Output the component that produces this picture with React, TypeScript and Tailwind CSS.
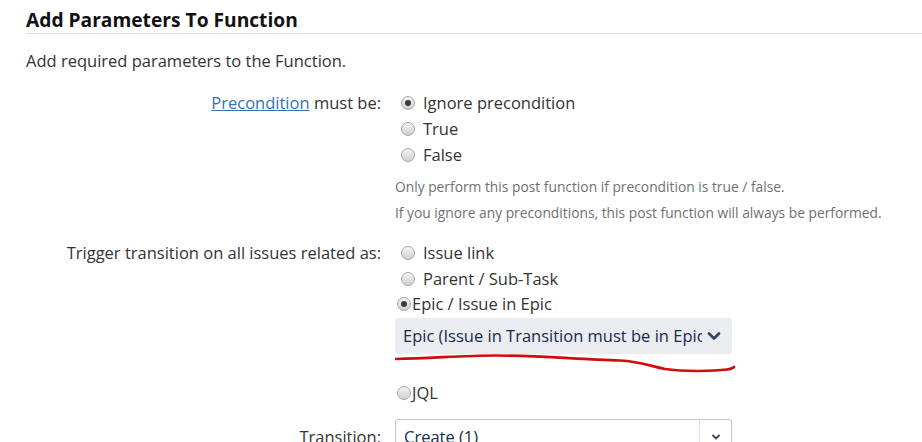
import React from 'react';

const FONT = { fontFamily: '"Open Sans", "Noto Sans", sans-serif' };

function Radio({ checked, label, tight }: { checked?: boolean; label: string; tight?: boolean }) {
  return (
    <div className={`flex items-center h-[26px] ${tight ? 'pl-[2px]' : 'pl-[6px]'}`}>
      <span className="relative inline-flex items-center justify-center w-[14px] h-[14px] rounded-full border border-[#a6a6a6] bg-gradient-to-b from-[#f4f4f4] to-[#d0d0d0]">
        {checked && <span className="w-[6px] h-[6px] rounded-full bg-[#3a3a3a]" />}
      </span>
      <span className={`${tight ? 'ml-[1px]' : 'ml-[8px]'} text-[16.5px] text-[#333]`}>{label}</span>
    </div>
  );
}

function Label({ children }: { children: React.ReactNode }) {
  return <div className="w-[381px] shrink-0 text-right text-[16.5px] text-[#333] leading-[26px]">{children}</div>;
}

export default function App() {
  return (
    <div className="w-[922px] h-[442px] overflow-hidden bg-white" style={FONT}>
      <div className="pl-[26px] pt-[7px]">
        <h2 className="text-[19.2px] font-bold text-[#111] leading-[26px] pb-[0px] border-b border-[#dcdcdc]">
          Add Parameters To Function
        </h2>
        <p className="mt-[14px] text-[16.5px] text-[#333] leading-[26px]">Add required parameters to the Function.</p>
      </div>

      <div className="mt-[16px] flex">
        <Label>
          <a className="text-[#3572b0] underline">Precondition</a> must be:
        </Label>
        <div className="ml-[14px]">
          <Radio checked label="Ignore precondition" />
          <Radio label="True" />
          <Radio label="False" />
          <div className="mt-[6px] text-[13.8px] text-[#707070] leading-[26px]">
            <div>Only perform this post function if precondition is true / false.</div>
            <div>If you ignore any preconditions, this post function will always be performed.</div>
          </div>
        </div>
      </div>

      <div className="mt-[14px] flex">
        <Label>Trigger transition on all issues related as:</Label>
        <div className="ml-[14px]">
          <Radio label="Issue link" />
          <Radio label="Parent / Sub-Task" />
          <div className="-mt-[1px]">
            <Radio checked tight label="Epic / Issue in Epic" />
          </div>
          <div className="relative mt-[1px] w-[337px] h-[36px] rounded-[3px] bg-[#ebecf0] flex items-center pl-[8px] pr-[10px]">
            <span className="flex-1 overflow-hidden whitespace-nowrap text-[16.5px] text-[#172b4d]">
              Epic (Issue in Transition must be in Epic)
            </span>
            <svg width="16" height="16" viewBox="0 0 16 16" className="ml-[4px] shrink-0">
              <path d="M3 5.5 L8 10.5 L13 5.5" fill="none" stroke="#344563" strokeWidth="2.8" strokeLinecap="round" strokeLinejoin="round" />
            </svg>
            <svg width="345" height="24" viewBox="0 0 345 24" className="absolute left-0 top-[36px] pointer-events-none">
              <path
                d="M1 5 C 40 4, 70 1.5, 100 1.5 C 140 1.5, 180 5, 225 6.5 C 245 7.5, 255 12, 270 15 C 290 18, 320 17, 332 15.5 C 336 15, 338 14, 339 13"
                fill="none"
                stroke="#d00c0c"
                strokeWidth="2.6"
                strokeLinecap="round"
              />
            </svg>
          </div>
          <div className="mt-[26px]">
            <Radio tight label="JQL" />
          </div>
        </div>
      </div>

      <div className="mt-[13px] flex">
        <Label>
          <span className="block pt-[5px]">Transition:</span>
        </Label>
        <div className="ml-[14px] w-[337px] h-[36px] rounded-[3px] border border-[#c1c7d0] bg-white flex">
          <span className="flex-1 pl-[8px] pt-[5px] text-[16.5px] text-[#172b4d]">Create (1)</span>
          <span className="w-[32px] border-l border-[#dfe1e6] flex items-center justify-center">
            <svg width="12" height="12" viewBox="0 0 12 12">
              <path d="M3 4.5 L6 7.5 L9 4.5" fill="none" stroke="#344563" strokeWidth="1.8" strokeLinecap="round" />
            </svg>
          </span>
        </div>
      </div>
    </div>
  );
}
